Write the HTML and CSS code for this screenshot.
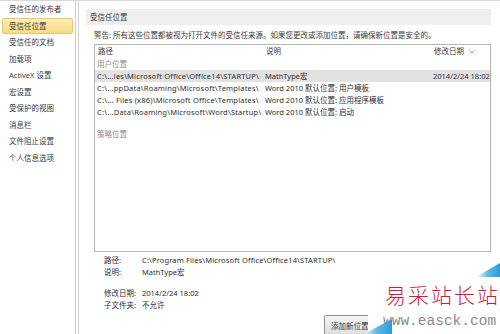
FILE: index.html
```html
<!DOCTYPE html>
<html>

<head>
    <title>信任中心 - 受信任位置</title>
    <link rel="stylesheet" href="styles.css">
</head>

<body>
    <div class="window">
        <ul class="sidebar">
            <li>受信任的发布者</li>
            <li class="active">受信任位置</li>
            <li>受信任的文档</li>
            <li>加载项</li>
            <li>ActiveX 设置</li>
            <li>宏设置</li>
            <li>受保护的视图</li>
            <li>消息栏</li>
            <li>文件阻止设置</li>
            <li>个人信息选项</li>
        </ul>
        <div class="pane">
            <div class="section-title">受信任位置</div>
            <p class="warning">警告: 所有这些位置都被视为打开文件的受信任来源。如果您更改或添加位置，请确保新位置是安全的。</p>
            <div class="list">
                <div class="list-head">
                    <span class="col-path">路径</span>
                    <span class="col-desc">说明</span>
                    <span class="col-date">修改日期 <svg class="sort" width="6" height="4" viewBox="0 0 6 4"><path d="M0.5 0.5 L3 3 L5.5 0.5" fill="none" stroke="#999" stroke-width="1"/></svg></span>
                </div>
                <div class="group">用户位置</div>
                <div class="row selected">
                    <span class="col-path">C:\...les\Microsoft Office\Office14\STARTUP\</span>
                    <span class="col-desc">MathType宏</span>
                    <span class="col-date">2014/2/24 18:02</span>
                </div>
                <div class="row">
                    <span class="col-path">C:\...ppData\Roaming\Microsoft\Templates\</span>
                    <span class="col-desc">Word 2010 默认位置: 用户模板</span>
                    <span class="col-date"></span>
                </div>
                <div class="row">
                    <span class="col-path">C:\... Files (x86)\Microsoft Office\Templates\</span>
                    <span class="col-desc">Word 2010 默认位置: 应用程序模板</span>
                    <span class="col-date"></span>
                </div>
                <div class="row">
                    <span class="col-path">C:\...Data\Roaming\Microsoft\Word\Startup\</span>
                    <span class="col-desc">Word 2010 默认位置: 启动</span>
                    <span class="col-date"></span>
                </div>
                <div class="group group-policy">策略位置</div>
            </div>
            <div class="details">
                <div class="detail"><span class="label">路径:</span><span class="path-full">C:\Program Files\Microsoft Office\Office14\STARTUP\</span></div>
                <div class="detail"><span class="label">说明:</span><span>MathType宏</span></div>
                <div class="detail spaced"><span class="label">修改日期:</span><span>2014/2/24 18:02</span></div>
                <div class="detail"><span class="label">子文件夹:</span><span>不允许</span></div>
            </div>
            <div class="actions">
                <button class="btn">添加新位置(A)...</button>
            </div>
        </div>

        <div class="watermark">
            <svg class="wedge wedge-top" width="24" height="14" viewBox="0 0 24 14">
                <defs>
                    <linearGradient id="wm1" x1="0" y1="0" x2="1" y2="0">
                        <stop offset="0" stop-color="#ffffff"/>
                        <stop offset="0.5" stop-color="#5fb8e6"/>
                        <stop offset="1" stop-color="#2d9bd8"/>
                    </linearGradient>
                </defs>
                <polygon points="0,14 24,0 24,14" fill="url(#wm1)"/>
            </svg>
            <div class="wm-name">易采站长站</div>
            <div class="wm-url">www.easck.com</div>
            <svg class="wedge wedge-bottom" width="30" height="16" viewBox="0 0 30 16">
                <defs>
                    <linearGradient id="wm2" x1="0" y1="0" x2="1" y2="0">
                        <stop offset="0" stop-color="#ffffff"/>
                        <stop offset="0.5" stop-color="#5fb8e6"/>
                        <stop offset="1" stop-color="#2d9bd8"/>
                    </linearGradient>
                </defs>
                <polygon points="0,16 30,0 30,16" fill="url(#wm2)"/>
            </svg>
        </div>
    </div>
</body>

</html>
```

FILE: styles.css
```css
body {
    margin: 0;
    background: #fff;
    font-family: "Noto Sans", "Noto Sans CJK SC", sans-serif;
    font-size: 7.5px;
    color: #2e2e2e;
}

.window {
    position: relative;
    display: flex;
    height: 334px;
    border-top: 1px solid #d8d8d8;
    box-sizing: border-box;
    overflow: hidden;
}

.sidebar {
    list-style: none;
    margin: 0;
    padding: 0;
    width: 75px;
    border-right: 1px solid #cfcfcf;
    flex-shrink: 0;
}

.sidebar li {
    height: 16.5px;
    line-height: 16.5px;
    padding-left: 7px;
    margin: 0 2px;
    color: #3c3c3c;
    white-space: nowrap;
}

.sidebar li.active {
    background: linear-gradient(#fdeeb6, #f9da84);
    border: 1px solid #e8c66a;
    border-radius: 2px;
    height: 14.5px;
    line-height: 14.5px;
    padding-left: 6px;
}

.pane {
    flex: 1;
    margin-left: 2px;
    border-left: 1px solid #cfcfcf;
    padding: 8px 9px 0 7px;
    min-width: 0;
}

.section-title {
    height: 16px;
    line-height: 16px;
    background: #efefef;
    padding-left: 4px;
    color: #3c3c3c;
}

.warning {
    margin: 4px 0 0 8px;
    line-height: 12px;
    white-space: nowrap;
    color: #3c3c3c;
}

.list {
    margin: 3px 0 0 8px;
    height: 208px;
    border: 1px solid #b5b5b5;
    box-sizing: border-box;
}

.list-head,
.row {
    display: flex;
    padding-left: 2px;
    white-space: nowrap;
}

.col-path,
.col-desc {
    width: 168px;
    flex-shrink: 0;
    overflow: hidden;
}

.col-date {
    flex: 1;
}

.list-head {
    height: 13px;
    line-height: 13px;
    padding-left: 3px;
    color: #3c3c3c;
}

.sort {
    margin-left: 3px;
    vertical-align: middle;
}

.group {
    height: 12px;
    line-height: 12px;
    padding-left: 2px;
    color: #8a8a8a;
}

.group-policy {
    margin-top: 10px;
}

.row {
    height: 12px;
    line-height: 12px;
}

.row .col-path {
    letter-spacing: 0.2px;
}

.row.selected {
    background: #e2e2e2;
}

.details {
    padding: 2px 0 0 18px;
}

.detail {
    display: flex;
    height: 12px;
    line-height: 12px;
}

.detail .path-full {
    letter-spacing: 0.15px;
}

.detail.spaced {
    margin-top: 9px;
}

.detail .label {
    width: 38px;
    flex-shrink: 0;
}

.actions {
    margin-top: 4px;
    padding-left: 238px;
}

.btn {
    font: inherit;
    font-size: 7.5px;
    height: 20px;
    padding: 0 6px;
    color: #333;
    background: linear-gradient(#f6f6f6, #dedede);
    border: 1px solid #8f8f8f;
    border-radius: 2px;
}

.watermark {
    position: absolute;
    left: 368px;
    top: 262px;
    width: 132px;
    height: 72px;
    background: #fff;
}

.wedge {
    position: absolute;
    display: block;
}

.wedge-top {
    right: 0;
    top: 0;
}

.wedge-bottom {
    left: -6px;
    bottom: 0;
}

.wm-name {
    position: absolute;
    left: 17px;
    top: 18px;
    font-family: "Noto Sans CJK SC", sans-serif;
    font-size: 21px;
    font-weight: 300;
    letter-spacing: 2px;
    line-height: 26px;
    color: #d4163f;
}

.wm-url {
    position: absolute;
    left: 15px;
    top: 50px;
    font-family: "Liberation Mono", monospace;
    font-size: 14.5px;
    line-height: 16px;
    color: #8c8c8c;
}
```
